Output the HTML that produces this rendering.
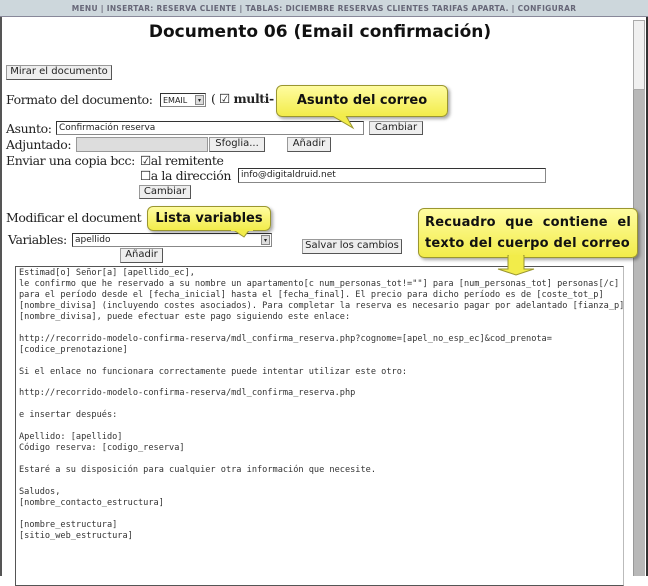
<!DOCTYPE html>
<html><head><meta charset="utf-8"><style>
*{margin:0;padding:0;box-sizing:border-box}
body{width:648px;height:576px;overflow:hidden;background:#fff;position:relative;font-family:"DejaVu Serif","Liberation Serif",serif;color:#222}
.a{position:absolute}
.btn{position:absolute;background:#eee;border:1px solid #999;border-right-color:#555;border-bottom-color:#555;font:10px "DejaVu Sans",sans-serif;text-align:center;line-height:12px;color:#222}
.inp{position:absolute;background:#fff;border:1px solid #888;border-top-color:#333;border-left-color:#333;font:9px "DejaVu Sans",sans-serif;padding-left:2px;line-height:13px}
.lbl{position:absolute;font-size:12.5px;white-space:nowrap;color:#222;letter-spacing:-0.4px}
.call{position:absolute;background:linear-gradient(#fffca0,#f2ec4a);border:1px solid #9a9630;border-radius:6px;font:bold 13px "DejaVu Sans",sans-serif;color:#111;box-shadow:2px 2px 3px rgba(0,0,0,.35)}
pre{position:absolute;left:19px;top:268px;font:8.6px/10.95px "DejaVu Sans Mono","Liberation Mono",monospace;color:#333}
</style></head><body>
<div class="a" style="left:0;top:0;width:648px;height:17px;background:#cdd7dc;border-bottom:1px solid #889"></div>
<div class="a" style="left:0;top:4px;width:648px;text-align:center;font:bold 7.5px 'DejaVu Sans',sans-serif;color:#667;letter-spacing:.3px">MENU | INSERTAR: RESERVA CLIENTE | TABLAS: DICIEMBRE RESERVAS CLIENTES TARIFAS APARTA. | CONFIGURAR</div>
<div class="a" style="left:0;top:17px;width:2px;height:559px;background:#555"></div>
<div class="a" style="left:646px;top:17px;width:2px;height:559px;background:#333"></div>
<div class="a" style="left:633px;top:20px;width:12px;height:556px;background:#b8b8b8;border-left:1px solid #999"></div>
<div class="a" style="left:633px;top:20px;width:12px;height:70px;background:#f0f0f0;border:1px solid #aaa"></div>
<div class="a" style="left:0;top:22px;width:640px;text-align:center;font:bold 17px 'DejaVu Sans',sans-serif;color:#111">Documento 06 (Email confirmación)</div>
<div class="btn" style="left:6px;top:65px;width:106px;height:15px">Mirar el documento</div>
<div class="lbl" style="left:6px;top:92px">Formato del documento:</div>
<div class="inp" style="left:160px;top:93px;width:46px;height:14px;font-size:8px">EMAIL<span style="position:absolute;right:1px;top:1px;width:9px;height:10px;background:#ddd;border:1px solid #888;font-size:6px;line-height:9px;text-align:center">▾</span></div>
<div class="lbl" style="left:211px;top:91px">( ☑ <b>multi-</b></div>
<div class="lbl" style="left:6px;top:121px">Asunto:</div>
<div class="inp" style="left:56px;top:121px;width:308px;height:14px">Confirmación reserva</div>
<div class="btn" style="left:369px;top:121px;width:54px;height:14px">Cambiar</div>
<div class="lbl" style="left:6px;top:137px">Adjuntado:</div>
<div class="a" style="left:76px;top:137px;width:132px;height:15px;background:#ddd;border:1px solid #999"></div>
<div class="btn" style="left:209px;top:137px;width:56px;height:15px">Sfoglia...</div>
<div class="btn" style="left:287px;top:137px;width:44px;height:15px">Añadir</div>
<div class="lbl" style="left:6px;top:153px">Enviar una copia bcc:</div>
<div class="lbl" style="left:140px;top:153px">☑al remitente</div>
<div class="lbl" style="left:140px;top:168px">☐a la dirección</div>
<div class="inp" style="left:238px;top:168px;width:308px;height:15px">info@digitaldruid.net</div>
<div class="btn" style="left:139px;top:185px;width:52px;height:14px">Cambiar</div>
<div class="lbl" style="left:6px;top:210px">Modificar el document<span style="margin-left:78px">finido):</span></div>
<div class="lbl" style="left:8px;top:232px">Variables:</div>
<div class="inp" style="left:72px;top:233px;width:200px;height:14px">apellido<span style="position:absolute;right:1px;top:1px;width:9px;height:10px;background:#ddd;border:1px solid #888;font-size:6px;line-height:9px;text-align:center">▾</span></div>
<div class="btn" style="left:120px;top:248px;width:43px;height:15px">Añadir</div>
<div class="btn" style="left:302px;top:239px;width:100px;height:15px">Salvar los cambios</div>
<div class="a" style="left:15px;top:266px;width:609px;height:320px;border:1px solid #555;border-right-color:#bbb"></div>
<pre>Estimad[o] Señor[a] [apellido_ec],
le confirmo que he reservado a su nombre un apartamento[c num_personas_tot!=""] para [num_personas_tot] personas[/c]
para el período desde el [fecha_inicial] hasta el [fecha_final]. El precio para dicho período es de [coste_tot_p]
[nombre_divisa] (incluyendo costes asociados). Para completar la reserva es necesario pagar por adelantado [fianza_p]
[nombre_divisa], puede efectuar este pago siguiendo este enlace:

http://recorrido-modelo-confirma-reserva/mdl_confirma_reserva.php?cognome=[apel_no_esp_ec]&amp;cod_prenota=
[codice_prenotazione]

Si el enlace no funcionara correctamente puede intentar utilizar este otro:

http://recorrido-modelo-confirma-reserva/mdl_confirma_reserva.php

e insertar después:

Apellido: [apellido]
Código reserva: [codigo_reserva]

Estaré a su disposición para cualquier otra información que necesite.

Saludos,
[nombre_contacto_estructura]

[nombre_estructura]
[sitio_web_estructura]</pre>
<div class="call" style="left:276px;top:85px;width:172px;height:32px;line-height:30px;text-align:center">Asunto del correo</div>
<svg class="a" style="left:325px;top:114px" width="40" height="16"><path d="M4 0 L28 14 L20 0Z" fill="#f2ec4a" stroke="#9a9630"/><rect x="3" y="0" width="26" height="2" fill="#f3ed4c"/></svg>
<div class="call" style="left:147px;top:206px;width:124px;height:25px;line-height:23px;text-align:center">Lista variables</div>
<svg class="a" style="left:230px;top:229px" width="30" height="10"><path d="M2 0 L14 8 L20 0Z" fill="#f2ec4a" stroke="#9a9630"/><rect x="1" y="0" width="22" height="2" fill="#f2ec4a"/></svg>
<div class="call" style="left:418px;top:208px;width:220px;height:50px;line-height:21px;padding:3px 6px;letter-spacing:0.2px"><div style="display:flex;justify-content:space-between"><span>Recuadro</span><span>que</span><span>contiene</span><span>el</span></div><div style="display:flex;justify-content:space-between"><span>texto del cuerpo del correo</span></div></div>
<svg class="a" style="left:480px;top:255px" width="70" height="22"><path d="M28 0 V14 H18 L36 20 L54 14 H44 V0Z" fill="#f2ec4a" stroke="#9a9630"/><rect x="29" y="0" width="14" height="3" fill="#f2ec4a"/></svg>
</body></html>
